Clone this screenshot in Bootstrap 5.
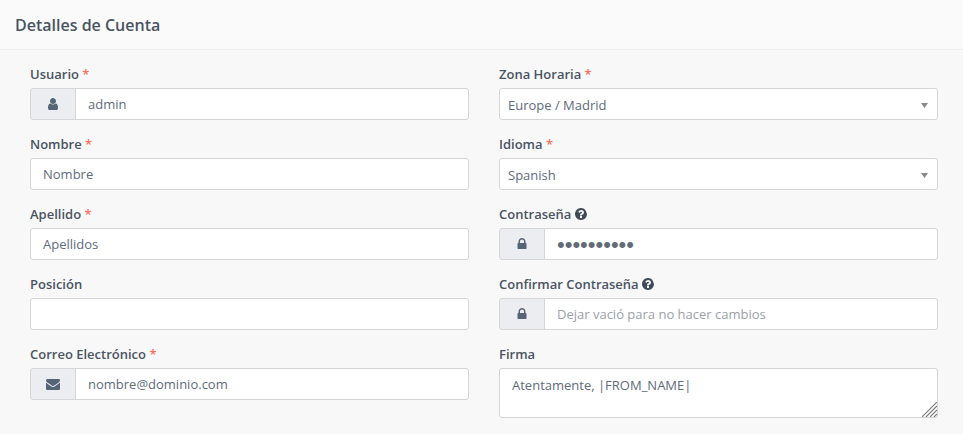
<!DOCTYPE html>
<html lang="es">
<head>
<meta charset="utf-8">
<title>Detalles de Cuenta</title>
<link rel="stylesheet" href="https://cdn.jsdelivr.net/npm/bootstrap@5.3.0/dist/css/bootstrap.min.css">
<style>
html, body { background: #f8f8f8; }
body { font-family: "Open Sans", "Liberation Sans", sans-serif; font-size: 13px; color: #4a5463; }
.acct-card { background: #f8f8f8; border: 0; border-radius: 0; }
.acct-head { background: #fafafa; border-bottom: 1px solid #eeeeee; border-radius: 0 !important; height: 50px; padding: 2px 15px 0; display: flex; align-items: center; }
.acct-head h1 { font-size: 16px; font-weight: 600; color: #4a5463; margin: 0; }
.acct-body { padding: 14px 25px 0 30px; }
.acct-row { --bs-gutter-x: 30px; }
.field { margin-bottom: 14px; }
.field label { display: block; font-size: 13px; font-weight: 600; line-height: 20px; margin: 0 0 4px; color: #4a5463; }
.req { color: #f8715f; }
.acct-ctl { font-size: 13px; height: 32px; min-height: 32px; padding: 0 12px; color: #5e6b7c; border: 1px solid #d6d6d6; border-radius: 3px; box-shadow: none; font-family: inherit; }
.acct-ctl::placeholder { color: #9ba1aa; }
.acct-pass { font-family: "Liberation Sans", sans-serif; font-size: 22px; color: #636b78; }
.acct-sel { padding: 3px 24px 0 8px; background-size: 7px 5px; background-position: right 9px top 14px; background-repeat: no-repeat;
  background-image: url("data:image/svg+xml,%3csvg xmlns='http://www.w3.org/2000/svg' viewBox='0 0 7 5'%3e%3cpath fill='%23888' d='M0 0h7L3.5 5z'/%3e%3c/svg%3e"); }
.acct-area { height: 50px; min-height: 50px; padding: 6px 12px; line-height: 20px; resize: vertical; }
.acct-area::-webkit-resizer { background-repeat: no-repeat; background-position: right bottom;
  background-image: url("data:image/svg+xml,%3csvg xmlns='http://www.w3.org/2000/svg' width='15' height='15'%3e%3cpath stroke='%23777' stroke-width='1.1' fill='none' d='M0 15L15 0M4 15L15 4M8 15L15 8M12 15L15 12'/%3e%3c/svg%3e"); }
.acct-add { width: 46px; justify-content: center; padding: 0; background: #ecedf0; border: 1px solid #d6d6d6; border-radius: 3px; color: #57647a; }
.acct-add svg { fill: #566478; display: block; }
.hint { fill: #3f4a58; vertical-align: -1px; }
</style>
</head>
<body>
<div class="card acct-card">
  <div class="card-header acct-head"><h1>Detalles de Cuenta</h1></div>
  <div class="card-body acct-body">
    <div class="row acct-row">
      <div class="col-6">
        <div class="field">
          <label for="u">Usuario <span class="req">*</span></label>
          <div class="input-group">
            <span class="input-group-text acct-add"><svg width="14" height="14" viewBox="0 0 1792 1792"><path d="M1536 1399q0 109-62.5 187t-150.5 78h-854q-88 0-150.5-78t-62.5-187q0-85 8.5-160.5t31.5-152 58.5-131 94-89 134.5-34.5q131 128 313 128t313-128q76 0 134.5 34.5t94 89 58.5 131 31.5 152 8.5 160.5zm-256-887q0 159-112.5 271.5t-271.5 112.5-271.5-112.5-112.5-271.5 112.5-271.5 271.5-112.5 271.5 112.5 112.5 271.5z"/></svg></span>
            <input id="u" class="form-control acct-ctl" type="text" value="admin">
          </div>
        </div>
        <div class="field">
          <label for="n">Nombre <span class="req">*</span></label>
          <input id="n" class="form-control acct-ctl" type="text" value="Nombre">
        </div>
        <div class="field">
          <label for="a">Apellido <span class="req">*</span></label>
          <input id="a" class="form-control acct-ctl" type="text" value="Apellidos">
        </div>
        <div class="field">
          <label for="p">Posición</label>
          <input id="p" class="form-control acct-ctl" type="text">
        </div>
        <div class="field">
          <label for="e">Correo Electrónico <span class="req">*</span></label>
          <div class="input-group">
            <span class="input-group-text acct-add"><svg width="14" height="14" viewBox="0 0 1792 1792"><path d="M1792 710v794q0 66-47 113t-113 47h-1472q-66 0-113-47t-47-113v-794q44 49 101 87 362 246 497 345 57 42 92.5 65.5t94.5 48 110 24.5h2q51 0 110-24.5t94.5-48 92.5-65.5q170-123 498-345 57-39 100-87zm0-294q0 79-49 151t-122 123q-376 261-468 325-10 7-42.5 30.5t-54 38-52 32.5-57.5 27-50 9h-2q-23 0-50-9t-57.5-27-52-32.5-54-38-42.5-30.5q-91-64-262-182.5t-205-142.5q-62-42-117-115.5t-55-136.5q0-78 41.5-130t118.5-52h1472q65 0 112.5 44t47.5 111z"/></svg></span>
            <input id="e" class="form-control acct-ctl" type="text" value="nombre@dominio.com">
          </div>
        </div>
      </div>
      <div class="col-6">
        <div class="field">
          <label for="z">Zona Horaria <span class="req">*</span></label>
          <select id="z" class="form-select acct-ctl acct-sel"><option>Europe / Madrid</option></select>
        </div>
        <div class="field">
          <label for="i">Idioma <span class="req">*</span></label>
          <select id="i" class="form-select acct-ctl acct-sel"><option>Spanish</option></select>
        </div>
        <div class="field">
          <label for="c">Contraseña <svg class="hint" width="12" height="12" viewBox="128 128 1536 1536"><path d="M1024 1376v-192q0-14-9-23t-23-9h-192q-14 0-23 9t-9 23v192q0 14 9 23t23 9h192q14 0 23-9t9-23zm256-672q0-88-55.5-163t-138.5-116-170-41q-243 0-371 213-15 24 8 42l132 100q7 6 19 6 16 0 25-12 53-68 86-92 34-24 86-24 48 0 85.5 26t37.5 59q0 38-20 61t-68 45q-63 28-115.5 86.5t-52.5 125.5v36q0 14 9 23t23 9h192q14 0 23-9t9-23q0-19 21.5-49.5t54.5-49.5q32-18 49-28.5t46-35 44.5-48 28-60.5 12.5-81zm384 192q0 209-103 385.5t-279.5 279.5-385.5 103-385.5-103-279.5-279.5-103-385.5 103-385.5 279.5-279.5 385.5-103 385.5 103 279.5 385.5 103 385.5z"/></svg></label>
          <div class="input-group">
            <span class="input-group-text acct-add"><svg width="14" height="14" viewBox="0 0 1792 1792"><path d="M640 768h512v-192q0-106-75-181t-181-75-181 75-75 181v192zm832 96v576q0 40-28 68t-68 28h-960q-40 0-68-28t-28-68v-576q0-40 28-68t68-28h32v-192q0-184 132-316t316-132 316 132 132 316v192h32q40 0 68 28t28 68z"/></svg></span>
            <input id="c" class="form-control acct-ctl acct-pass" type="password" value="0123456789">
          </div>
        </div>
        <div class="field">
          <label for="cc">Confirmar Contraseña <svg class="hint" width="12" height="12" viewBox="128 128 1536 1536"><path d="M1024 1376v-192q0-14-9-23t-23-9h-192q-14 0-23 9t-9 23v192q0 14 9 23t23 9h192q14 0 23-9t9-23zm256-672q0-88-55.5-163t-138.5-116-170-41q-243 0-371 213-15 24 8 42l132 100q7 6 19 6 16 0 25-12 53-68 86-92 34-24 86-24 48 0 85.5 26t37.5 59q0 38-20 61t-68 45q-63 28-115.5 86.5t-52.5 125.5v36q0 14 9 23t23 9h192q14 0 23-9t9-23q0-19 21.5-49.5t54.5-49.5q32-18 49-28.5t46-35 44.5-48 28-60.5 12.5-81zm384 192q0 209-103 385.5t-279.5 279.5-385.5 103-385.5-103-279.5-279.5-103-385.5 103-385.5 279.5-279.5 385.5-103 385.5 103 279.5 385.5 103 385.5z"/></svg></label>
          <div class="input-group">
            <span class="input-group-text acct-add"><svg width="14" height="14" viewBox="0 0 1792 1792"><path d="M640 768h512v-192q0-106-75-181t-181-75-181 75-75 181v192zm832 96v576q0 40-28 68t-68 28h-960q-40 0-68-28t-28-68v-576q0-40 28-68t68-28h32v-192q0-184 132-316t316-132 316 132 132 316v192h32q40 0 68 28t28 68z"/></svg></span>
            <input id="cc" class="form-control acct-ctl" type="password" placeholder="Dejar vació para no hacer cambios">
          </div>
        </div>
        <div class="field">
          <label for="f">Firma</label>
          <textarea id="f" class="form-control acct-ctl acct-area">Atentamente, |FROM_NAME|</textarea>
        </div>
      </div>
    </div>
  </div>
</div>
</body>
</html>
